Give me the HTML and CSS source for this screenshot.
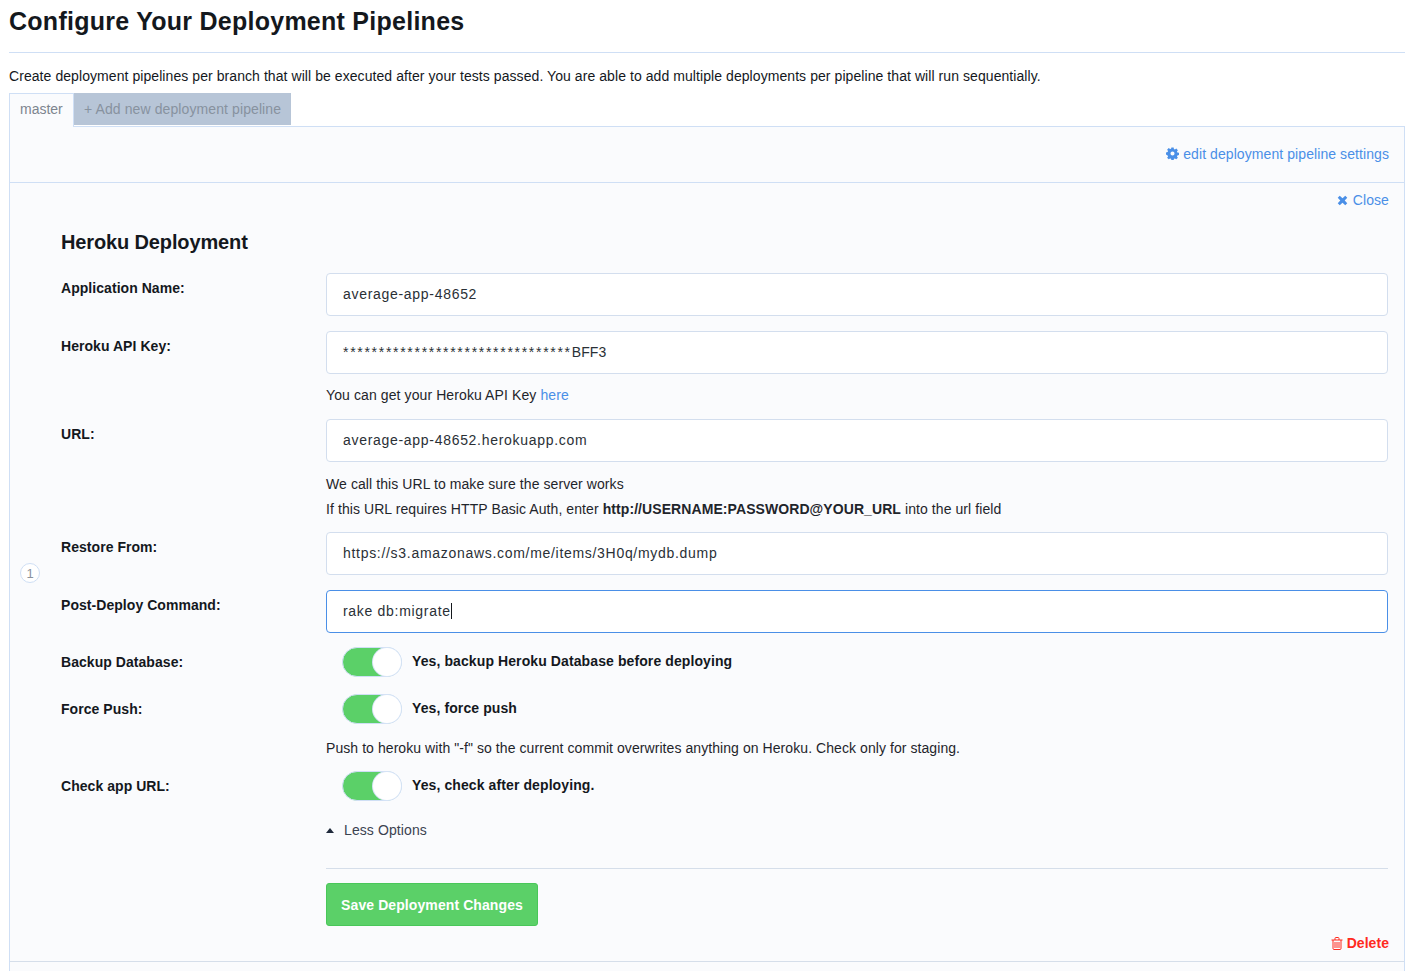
FILE: index.html
```html
<!DOCTYPE html>
<html lang="en">
<head>
    <meta charset="UTF-8">
    <title>Configure Your Deployment Pipelines</title>
    <link rel="stylesheet" href="styles.css">
</head>
<body>
    <h1 class="page-title">Configure Your Deployment Pipelines</h1>
    <p class="intro">Create deployment pipelines per branch that will be executed after your tests passed. You are able to add multiple deployments per pipeline that will run sequentially.</p>

    <div class="tabs">
        <a class="tab tab-active">master</a>
        <a class="tab tab-add">+ Add new deployment pipeline</a>
    </div>

    <div class="panel">
        <div class="panel-head">
            <a class="link">
                <svg class="icon" viewBox="0 0 14 14"><path fill="#4a8fe7" fill-rule="evenodd" d="M5.8.5h2.4l.35 1.75 1.05.45 1.5-1 1.7 1.7-1 1.5.45 1.05 1.75.35v2.4l-1.75.35-.45 1.05 1 1.5-1.7 1.7-1.5-1-1.05.45-.35 1.75H5.8l-.35-1.75-1.05-.45-1.5 1-1.7-1.7 1-1.5-.45-1.05L0 8.2V5.8l1.75-.35.45-1.05-1-1.5 1.7-1.7 1.5 1 1.05-.45zM7 4.8a2.2 2.2 0 1 0 0 4.4 2.2 2.2 0 0 0 0-4.4z"/></svg>
                edit deployment pipeline settings
            </a>
        </div>

        <div class="deploy">
            <div class="step-num">1</div>
            <div class="close-row">
                <a class="link">
                    <svg class="icon icon-x" viewBox="0 0 12 12"><path fill="#4a8fe7" d="M3 .8 6 3.6 9 .8l2.2 2.2L8.400 6l2.800 3L9 11.200 6 8.400l-3 2.800L.8 9l2.800-3L.8 3z"/></svg>
                    Close
                </a>
            </div>
            <h2 class="deploy-title">Heroku Deployment</h2>

            <div class="row">
                <label class="row-label">Application Name:</label>
                <div class="row-body"><div class="field">average-app-48652</div></div>
            </div>
            <div class="row">
                <label class="row-label">Heroku API Key:</label>
                <div class="row-body">
                    <div class="field"><span class="masked">********************************</span><span class="key-end">BFF3</span></div>
                    <p class="help">You can get your Heroku API Key <a class="help-link">here</a></p>
                </div>
            </div>
            <div class="row">
                <label class="row-label">URL:</label>
                <div class="row-body">
                    <div class="field">average-app-48652.herokuapp.com</div>
                    <p class="help help-url">We call this URL to make sure the server works<br>If this URL requires HTTP Basic Auth, enter <b>http://USERNAME:PASSWORD@YOUR_URL</b> into the url field</p>
                </div>
            </div>
            <div class="row">
                <label class="row-label">Restore From:</label>
                <div class="row-body"><div class="field">https://s3.amazonaws.com/me/items/3H0q/mydb.dump</div></div>
            </div>
            <div class="row row-last">
                <label class="row-label">Post-Deploy Command:</label>
                <div class="row-body"><div class="field field-focus">rake db:migrate<span class="caret"></span></div></div>
            </div>

            <div class="row row-toggle">
                <label class="row-label">Backup Database:</label>
                <div class="row-body">
                    <div class="toggle-line"><span class="toggle"><span class="knob"></span></span><b>Yes, backup Heroku Database before deploying</b></div>
                </div>
            </div>
            <div class="row row-toggle">
                <label class="row-label">Force Push:</label>
                <div class="row-body">
                    <div class="toggle-line"><span class="toggle"><span class="knob"></span></span><b>Yes, force push</b></div>
                    <p class="help help-push">Push to heroku with "-f" so the current commit overwrites anything on Heroku. Check only for staging.</p>
                </div>
            </div>
            <div class="row row-toggle">
                <label class="row-label">Check app URL:</label>
                <div class="row-body">
                    <div class="toggle-line"><span class="toggle"><span class="knob"></span></span><b>Yes, check after deploying.</b></div>
                </div>
            </div>

            <div class="row-actions">
                <a class="less"><span class="arrow"></span>Less Options</a>
                <hr class="rule">
                <button class="save">Save Deployment Changes</button>
            </div>

            <div class="delete-row">
                <a class="delete">
                    <svg class="icon-trash" viewBox="0 0 12 13"><path fill="none" stroke="#ff2a1f" d="M.5 3h11M2 3v8.500c0 .6.400 1 1 1h6c.6 0 1-.4 1-1V3M4 3V1.500c0-.6.300-1 .8-1h2.400c.5 0 .8.400.8 1V3"/><path stroke="#ff2a1f" d="M4 5v6M6 5v6M8 5v6"/></svg>
                    Delete
                </a>
            </div>
        </div>
    </div>
</body>
</html>
```

FILE: styles.css
```css
* { box-sizing: border-box; }

html, body { height: 971px; overflow: hidden; }

body {
    margin: 0;
    padding: 0 16px 0 9px;
    background: #fff;
    color: #14181d;
    font-family: "Liberation Sans", Arial, sans-serif;
    font-size: 14px;
}

.page-title {
    margin: 0;
    height: 53px;
    padding-top: 6px;
    border-bottom: 1px solid #cfdff5;
    font-size: 25px;
    line-height: 30px;
    font-weight: bold;
    letter-spacing: 0.26px;
}

.intro {
    margin: 15px 0 0;
    height: 25px;
    line-height: 17px;
    letter-spacing: 0.07px;
}

/* tabs */
.tabs {
    display: flex;
    height: 34px;
    font-size: 14px;
}
.tab { display: block; height: 32px; line-height: 32px; }
.tab-active {
    width: 65px;
    height: 34px;
    padding-left: 10px;
    background: #fafbfd;
    border: 1px solid #cfdff5;
    border-bottom: none;
    color: #7d858f;
    line-height: 31px;
    position: relative;
    z-index: 1;
}
.tab-add {
    width: 217px;
    padding-left: 10px;
    background: #b7c5d7;
    color: #87929f;
    letter-spacing: 0.1px;
}

/* panel */
.panel {
    margin-top: -1px;
    height: 845px;
    background: #fafbfd;
    border-left: 1px solid #cfdff5;
    border-right: 1px solid #cfdff5;
    border-top: 1px solid #cfdff5;
}
.panel-head {
    height: 56px;
    padding: 19px 15px 0 0;
    text-align: right;
    border-bottom: 1px solid #cfdff5;
    line-height: 17px;
}
.link { color: #4a8fe7; letter-spacing: 0.08px; }
.icon { width: 13px; height: 13px; vertical-align: -1px; }
.icon-x { width: 11px; height: 11px; margin-right: 1px; vertical-align: -0.5px; }

.deploy { position: relative; padding: 0 16px 0 51px; height: 779px; border-bottom: 1px solid #d5deea; }

.step-num {
    position: absolute;
    left: 10px;
    top: 380px;
    width: 20px;
    height: 20px;
    border: 1px solid #cfdff5;
    border-radius: 50%;
    text-align: center;
    font-size: 13px;
    line-height: 20px;
    color: #8b939d;
    background: #fff;
}

.close-row { padding-top: 9px; margin-right: -1px; height: 43px; text-align: right; line-height: 17px; }

.deploy-title {
    margin: 0;
    height: 47px;
    padding-top: 4px;
    font-size: 20px;
    line-height: 24px;
    font-weight: bold;
    letter-spacing: -0.13px;
}

/* form rows */
.row { display: flex; margin-bottom: 15px; }
.row-last { margin-bottom: 14px; }
.row-label {
    width: 265px;
    flex: none;
    padding-top: 7px;
    font-weight: bold;
    line-height: 17px;
    letter-spacing: 0.05px;
}
.row-body { flex: 1; min-width: 0; }

.field {
    height: 43px;
    padding-left: 16px;
    background: #fff;
    border: 1px solid #d3deee;
    border-radius: 4px;
    line-height: 41px;
    letter-spacing: 0.7px;
    color: #2a3036;
}
.masked { letter-spacing: 1.7px; }
.key-end { letter-spacing: 0.1px; }
.field-focus { border-color: #4a8fe7; }
.caret {
    display: inline-block;
    width: 1px;
    height: 16px;
    background: #14181d;
    vertical-align: -3px;
}

.help {
    margin: 9px 0 -4px;
    line-height: 25px;
    letter-spacing: 0.1px;
    color: #1f252b;
}
.help-url { margin: 10px 0 -5px; letter-spacing: 0.08px; }
.help-link { color: #4a8fe7; }
.help-push { margin: 12px 0 -7px; letter-spacing: 0.07px; }

/* toggles */
.row-toggle { margin-bottom: 17px; }
.toggle-line {
    display: flex;
    align-items: center;
    height: 30px;
    padding-left: 16px;
    letter-spacing: 0.1px;
}
.toggle-line b { margin-top: -2px; }
.toggle {
    width: 60px;
    height: 30px;
    margin-right: 10px;
    padding: 0 0 0 30px;
    display: block;
    flex: none;
    background: #5bd068;
    border: 1px solid #cfdff5;
    border-radius: 15px;
}
.knob {
    display: block;
    width: 28px;
    height: 28px;
    background: #fff;
    border-radius: 50%;
    box-shadow: 0 0 0 1px #d6e3f6;
}

.row-actions { margin-left: 265px; padding-top: 4px; }
.less { display: block; height: 17px; line-height: 17px; color: #3b4250; letter-spacing: 0.1px; }
.arrow {
    display: inline-block;
    width: 0;
    height: 0;
    margin-right: 10px;
    border: 4px solid transparent;
    border-top: none;
    border-bottom: 5px solid #1f2a3c;
    vertical-align: 2px;
}
.rule { margin: 29px 0 14px; border: none; border-top: 1px solid #d5deea; }
.save {
    display: block;
    width: 212px;
    height: 43px;
    padding: 0;
    background: #5bd068;
    border: 1px solid #49c759;
    border-radius: 3px;
    color: #fff;
    font-family: inherit;
    font-size: 14px;
    font-weight: bold;
    letter-spacing: 0.09px;
}

.delete-row { margin-top: 9px; margin-right: -1px; text-align: right; line-height: 17px; }
.delete { color: #ff2a1f; font-weight: bold; letter-spacing: 0.05px; }
.icon-trash { width: 12px; height: 13px; vertical-align: -2px; }
```
